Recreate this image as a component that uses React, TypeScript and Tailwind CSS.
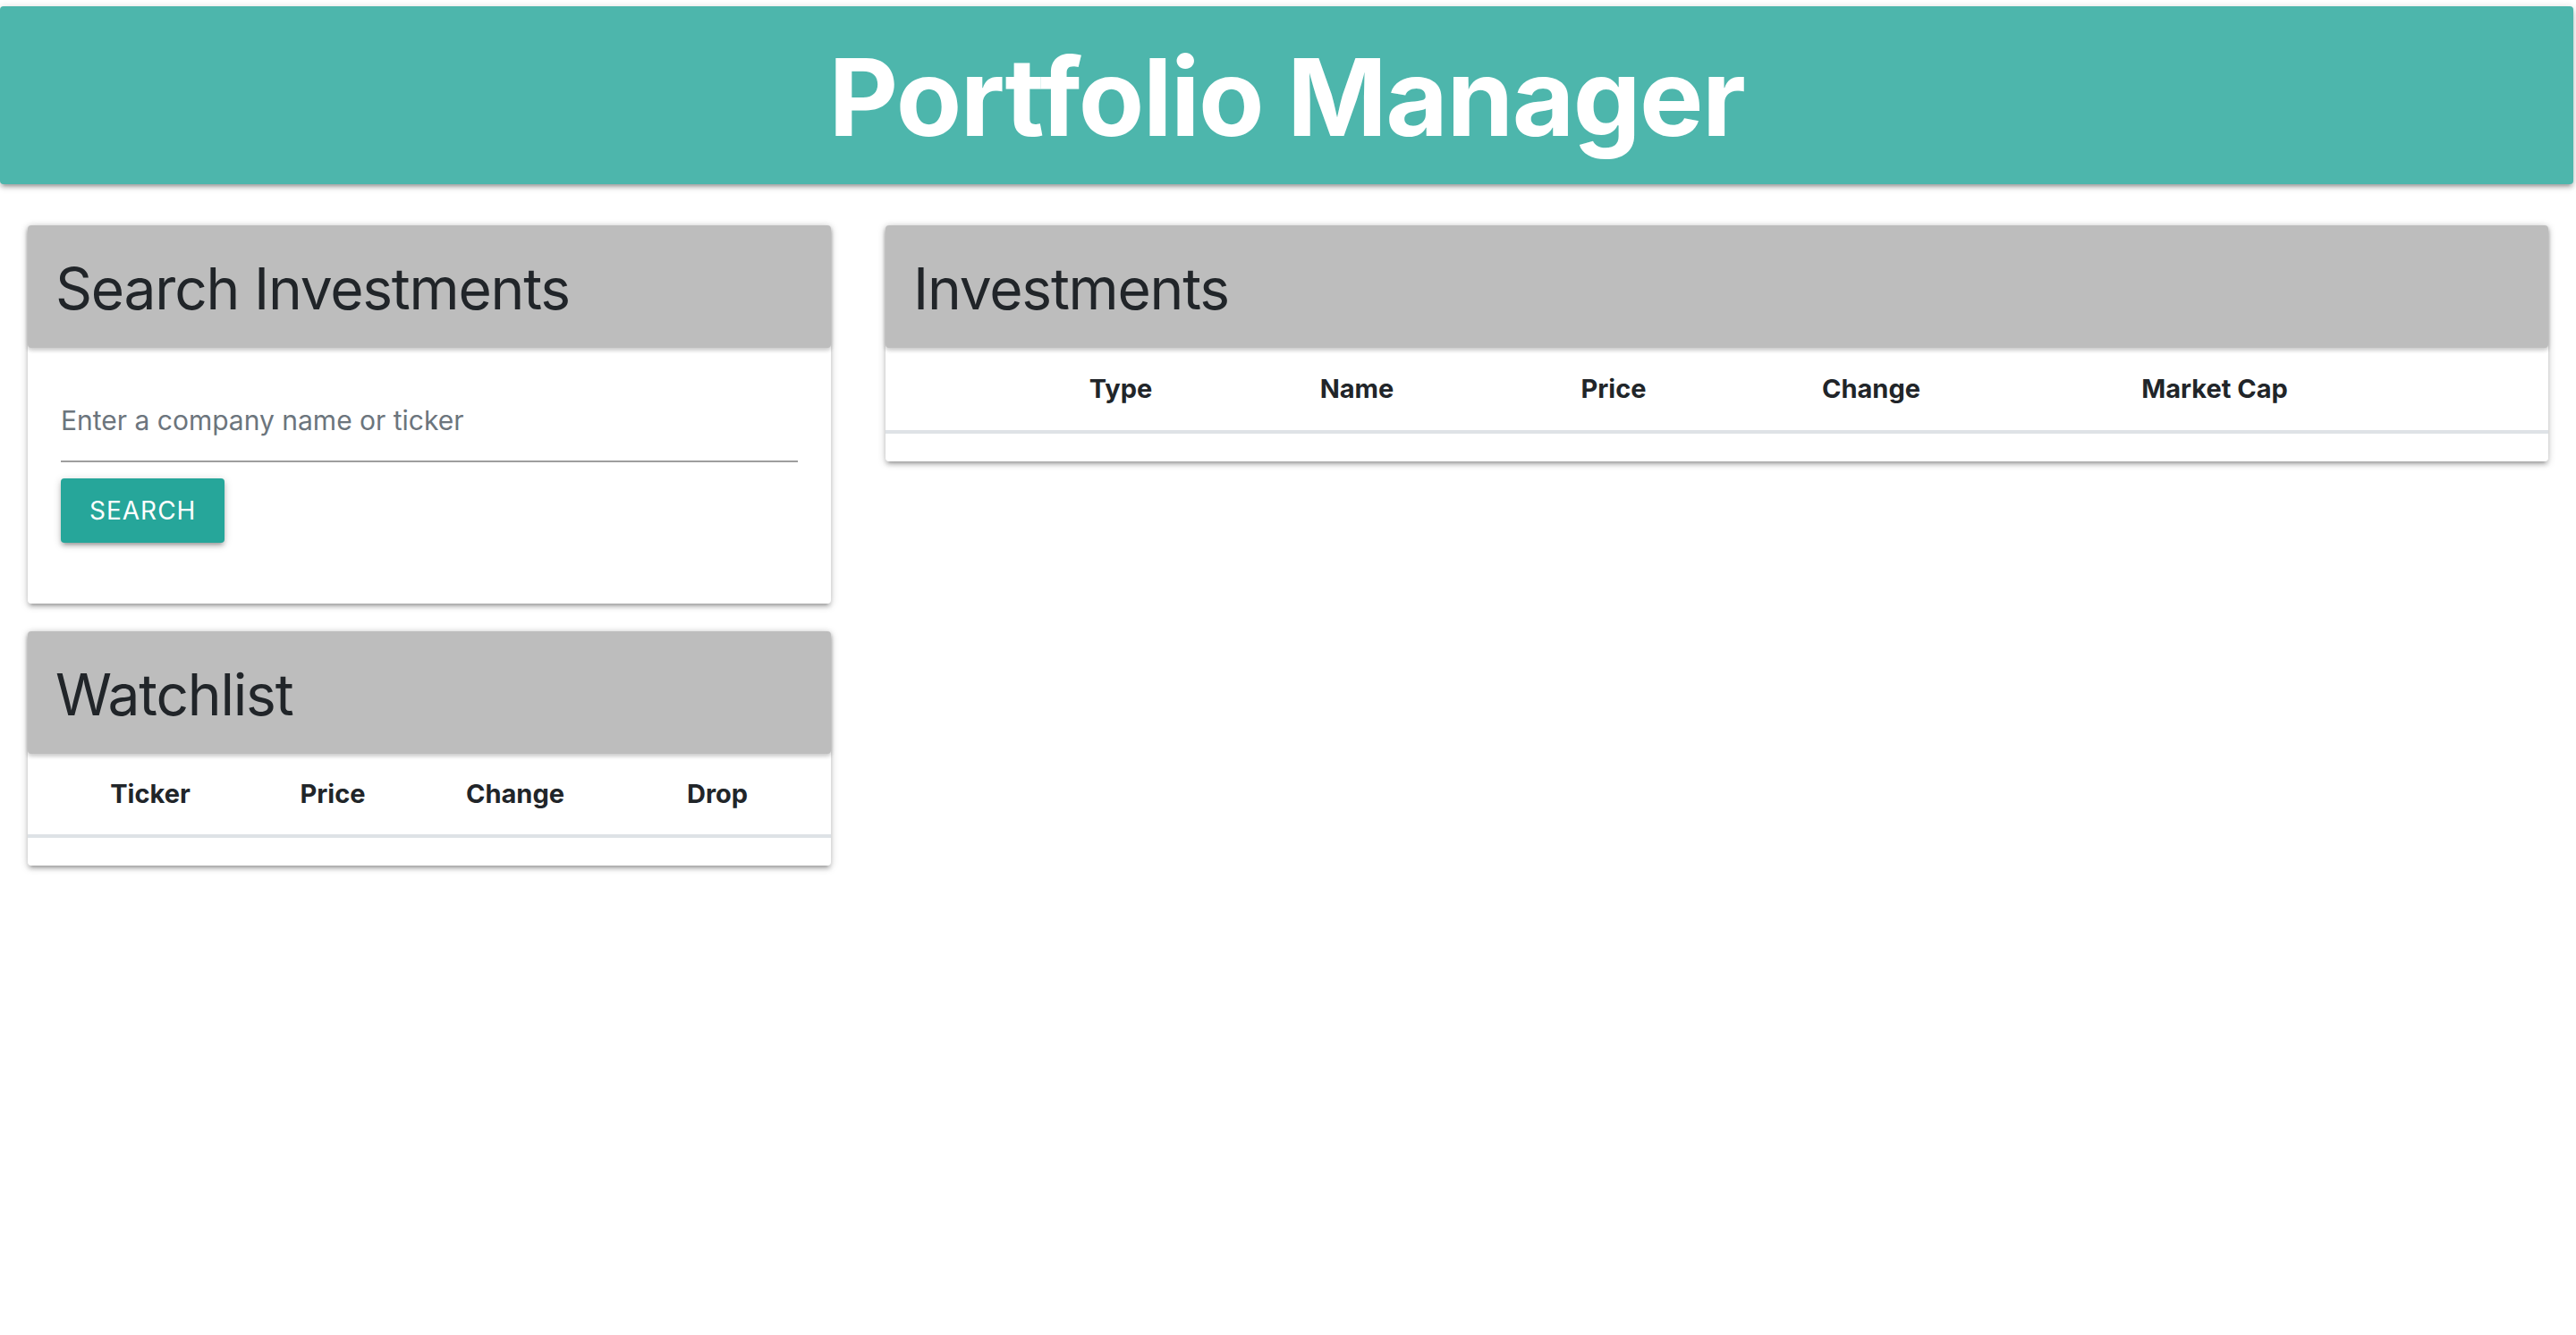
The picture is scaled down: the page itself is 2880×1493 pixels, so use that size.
import React from 'react';

const cardShadow =
  'shadow-[0_4px_4px_0_rgba(0,0,0,0.14),0_6px_2px_-4px_rgba(0,0,0,0.12),0_2px_10px_0_rgba(0,0,0,0.2)]';

function CardTitle({ children }: { children: React.ReactNode }) {
  return (
    <div className="flex h-[137px] items-center rounded-[4px] bg-[#bdbdbd] px-[31px] pt-[4px] shadow-[0_3px_4px_0_rgba(0,0,0,0.14),0_1px_6px_0_rgba(0,0,0,0.12)]">
      <h2 className="text-[64px] leading-none font-normal tracking-[-1.2px] text-[#212529]">{children}</h2>
    </div>
  );
}

function HeaderRow({ cols, pad, height }: { cols: { label: string; w: string }[]; pad: string; height: string }) {
  return (
    <div className="pb-[31px]">
      <div className={`flex items-center border-b-4 border-[#dee2e6] ${pad} ${height}`}>
        {cols.map((c) => (
          <div key={c.label} className={`${c.w} text-center text-[29px] font-bold text-[#212529]`}>
            {c.label}
          </div>
        ))}
      </div>
    </div>
  );
}

export default function App() {
  return (
    <div className="min-h-screen bg-white font-['Inter','Liberation_Sans',sans-serif]">
      {/* Top bar */}
      <header className="mt-[7px] mr-[3px] flex h-[199px] items-center justify-center rounded-[4px] bg-[#4db6ac] shadow-[0_4px_4px_0_rgba(0,0,0,0.14),0_6px_2px_-4px_rgba(0,0,0,0.12),0_2px_10px_0_rgba(0,0,0,0.2)]">
        <h1 className="pt-[4px] text-[120px] leading-none font-bold tracking-[-1.5px] text-white">Portfolio Manager</h1>
      </header>

      <main className="flex items-start gap-[61px] px-[31px] pt-[46px]">
        {/* Left column */}
        <div className="flex w-[898px] shrink-0 flex-col gap-[31px]">
          <section className={`rounded-[4px] bg-white ${cardShadow}`}>
            <CardTitle>Search Investments</CardTitle>
            <div className="px-[37px] pt-[36px] pb-[68px]">
              <input
                type="text"
                placeholder="Enter a company name or ticker"
                className="h-[92px] w-full border-b-2 border-[#9e9e9e] bg-transparent text-[30px] text-[#212529] outline-none placeholder:text-[#6c757d]"
              />
              <button className="mt-[18px] h-[72px] rounded-[4px] bg-[#26a69a] px-[32px] text-[28px] tracking-[1px] text-white uppercase shadow-[0_4px_4px_0_rgba(0,0,0,0.14),0_6px_2px_-4px_rgba(0,0,0,0.12),0_2px_10px_0_rgba(0,0,0,0.2)]">
                Search
              </button>
            </div>
          </section>

          <section className={`rounded-[4px] bg-white ${cardShadow}`}>
            <CardTitle>Watchlist</CardTitle>
            <HeaderRow
              pad="pl-[35px]"
              height="h-[94px]"
              cols={[
                { label: 'Ticker', w: 'w-[204px]' },
                { label: 'Price', w: 'w-[204px]' },
                { label: 'Change', w: 'w-[204px]' },
                { label: 'Drop', w: 'w-[248px]' },
              ]}
            />
          </section>
        </div>

        {/* Right column */}
        <section className={`flex-1 rounded-[4px] bg-white ${cardShadow}`}>
          <CardTitle>Investments</CardTitle>
          <HeaderRow
            pad="pl-[131px]"
            height="h-[96px]"
            cols={[
              { label: 'Type', w: 'w-[264px]' },
              { label: 'Name', w: 'w-[264px]' },
              { label: 'Price', w: 'w-[310px]' },
              { label: 'Change', w: 'w-[266px]' },
              { label: 'Market Cap', w: 'w-[502px]' },
            ]}
          />
        </section>
      </main>
    </div>
  );
}
